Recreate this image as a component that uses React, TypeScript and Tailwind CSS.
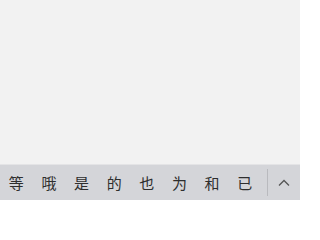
import React from 'react';

const candidates = ['等', '哦', '是', '的', '也', '为', '和', '已'];

export default function App() {
  return (
    <div className="w-[300px] h-[200px] flex flex-col bg-[#f2f2f2]" style={{ fontFamily: '"Noto Sans CJK SC", sans-serif' }}>
      <div className="flex-1" />
      {/* candidate bar */}
      <div className="h-[36px] flex items-center bg-[#d4d5d9] border-t border-[#e4e4e6]">
        <div className="w-[261px] flex">
          {candidates.map((c) => (
            <span key={c} className="flex-1 text-center text-[15px] leading-none text-[#2e2e2e]">
              {c}
            </span>
          ))}
        </div>
        <div className="ml-[6px] w-px h-[27px] bg-[#b9babe]" />
        <div className="flex-1 flex items-center justify-center">
          <svg width="12" height="8" viewBox="0 0 12 8" fill="none" stroke="#555" strokeWidth="1.3">
            <path d="M1 6.5 L6 1.5 L11 6.5" />
          </svg>
        </div>
      </div>
    </div>
  );
}
